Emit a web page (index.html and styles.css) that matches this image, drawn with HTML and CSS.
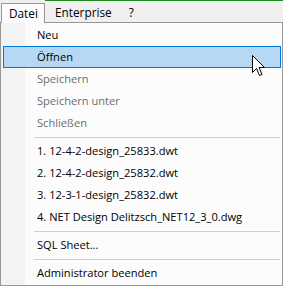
FILE: index.html
```html
<!DOCTYPE html>
<html>
<head>
<meta charset="utf-8">
<link rel="stylesheet" href="styles.css">
</head>
<body>
<div class="menubar">
  <div class="bar-item open">Datei</div>
  <div class="bar-item enterprise">Enterprise</div>
  <div class="bar-item help">?</div>
</div>
<div class="dropdown">
  <div class="item">Neu</div>
  <div class="item hover">Öffnen</div>
  <div class="item disabled">Speichern</div>
  <div class="item disabled">Speichern unter</div>
  <div class="item disabled">Schließen</div>
  <div class="sep"></div>
  <div class="item">1. 12-4-2-design_25833.dwt</div>
  <div class="item">2. 12-4-2-design_25832.dwt</div>
  <div class="item">3. 12-3-1-design_25832.dwt</div>
  <div class="item">4. NET Design Delitzsch_NET12_3_0.dwg</div>
  <div class="sep"></div>
  <div class="item">SQL Sheet...</div>
  <div class="sep"></div>
  <div class="item">Administrator beenden</div>
</div>
<svg class="cursor" width="14" height="22" viewBox="0 0 14 22">
  <path d="M0.5 0.5 V17.5 L4.5 13.5 L7.5 20.5 L10 19.5 L7 12.5 H12.5 Z" fill="#fff" stroke="#000" stroke-width="1" stroke-linejoin="miter"/>
</svg>
</body>
</html>
```
FILE: styles.css
```css
html, body {
  margin: 0;
  padding: 0;
  background: #f0f0f0;
  width: 283px;
  height: 286px;
  overflow: hidden;
  font-family: "Open Sans", "Noto Sans", sans-serif;
  font-size: 11.1px;
  color: #000;
}
.menubar {
  position: relative;
  height: 22px;
  display: flex;
  align-items: flex-end;
  background: #f0f0f0;
  font-size: 11.8px;
}
.menubar::before {
  content: "";
  position: absolute;
  left: 45px;
  right: 0;
  top: 0;
  height: 1px;
  background: #1c8a1c;
}
.bar-item {
  height: 19px;
  line-height: 18px;
  box-sizing: border-box;
}
.bar-item.open {
  position: relative;
  z-index: 1;
  margin-left: 1px;
  width: 44px;
  height: 20px;
  margin-bottom: -1px;
  padding-left: 7px;
  background: #fcfcfc;
  border: 1px solid #979797;
  border-bottom: none;
}
.bar-item.enterprise {
  padding-left: 10px;
}
.bar-item.help {
  padding-left: 17px;
}
.dropdown {
  box-sizing: border-box;
  width: 283px;
  height: 264px;
  border: 1px solid #979797;
  background: linear-gradient(to right, #f3f3f3 0, #f3f3f3 24px, #fcfcfc 24px);
  padding: 1px 1px 0 2px;
}
.item {
  box-sizing: border-box;
  height: 22px;
  line-height: 20px;
  padding-left: 33px;
  white-space: nowrap;
  border: 1px solid transparent;
}
.item.hover {
  background: #b7d8f4;
  border-color: #0078d7;
}
.item.disabled {
  color: #6d6d6d;
}
.sep {
  height: 6px;
  margin-left: 31px;
  margin-right: 1px;
  background: linear-gradient(#cfcfcf, #cfcfcf) no-repeat 0 3px / 100% 1px;
}
.cursor {
  position: absolute;
  left: 252px;
  top: 55px;
}
```
